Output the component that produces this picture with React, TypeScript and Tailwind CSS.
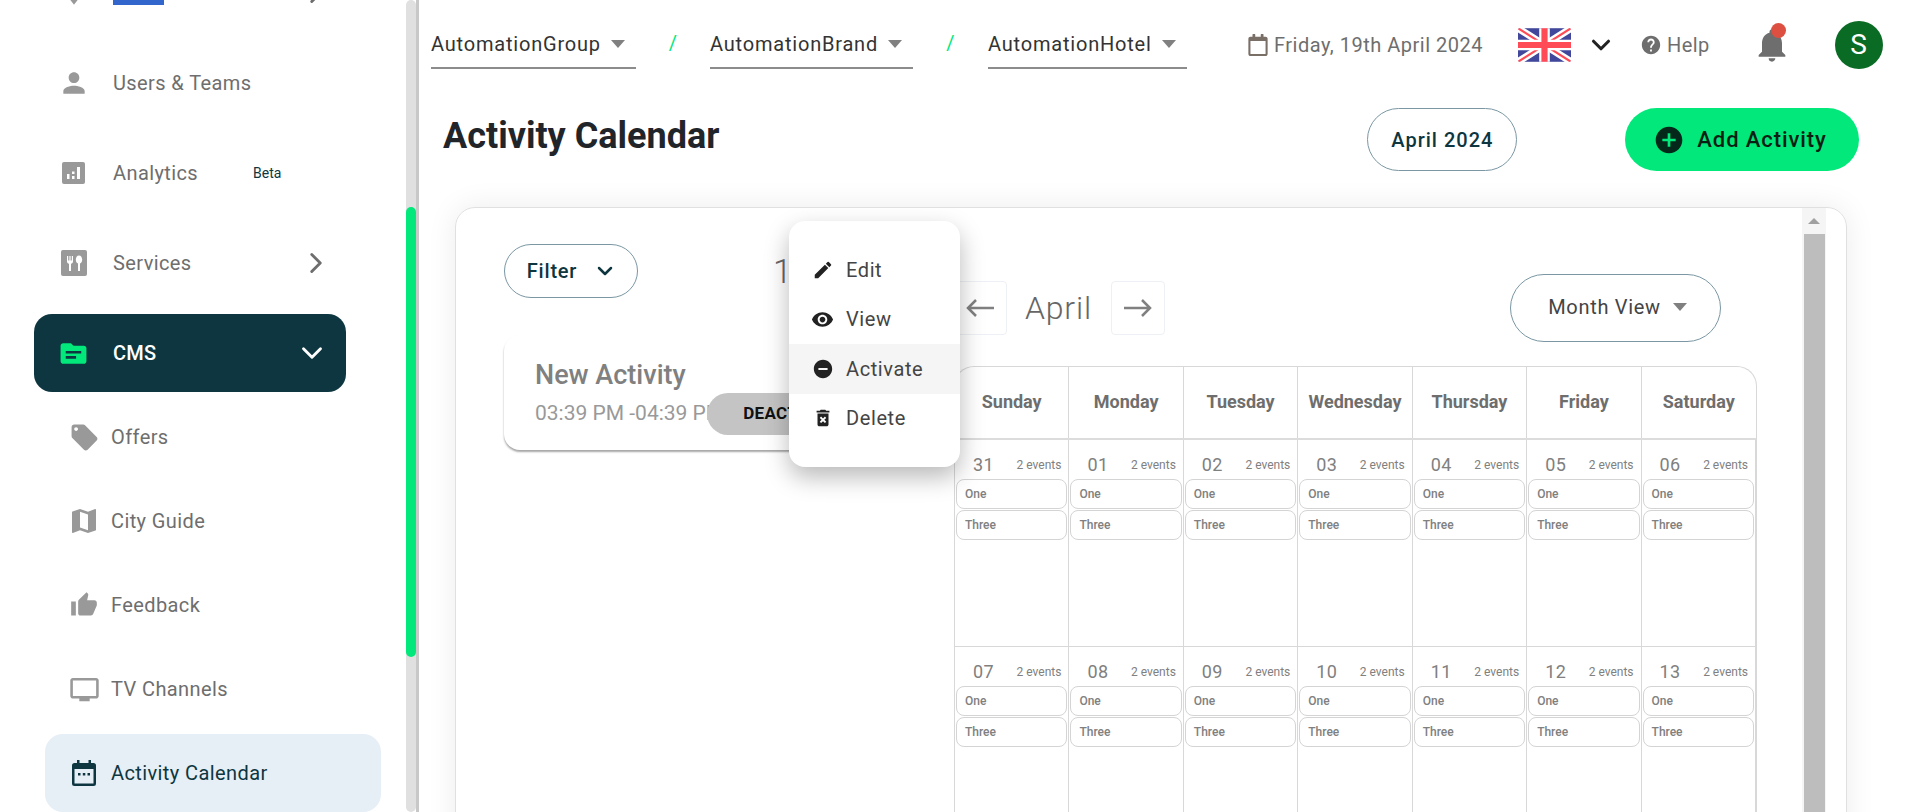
import { ChevronDown, ChevronRight } from 'lucide-react'
import { FaRegCalendar } from 'react-icons/fa'
import {
  MdAddCircle,
  MdDeleteForever,
  MdDoDisturbOn,
  MdEdit,
  MdHelp,
  MdLocalOffer,
  MdLocationOn,
  MdMap,
  MdNotifications,
  MdPerson,
  MdThumbUp,
  MdTopic,
  MdTv,
  MdVisibility,
} from 'react-icons/md'

const days = ['Sunday', 'Monday', 'Tuesday', 'Wednesday', 'Thursday', 'Friday', 'Saturday']
const dates = ['31', '01', '02', '03', '04', '05', '06', '07', '08', '09', '10', '11', '12', '13']

function AnalyticsIcon() {
  return (
    <svg width="23" height="22" viewBox="0 0 23 22" fill="none">
      <rect width="23" height="22" rx="2" fill="#999" />
      <rect x="5" y="12" width="2.500" height="5" fill="#fff" />
      <rect x="10" y="14" width="2.500" height="3" fill="#fff" />
      <rect x="10" y="9.500" width="2.500" height="2.500" fill="#fff" />
      <rect x="15" y="5" width="3" height="12" fill="#fff" />
    </svg>
  )
}

function ServicesIcon() {
  return (
    <svg width="26" height="26" viewBox="0 0 26 26" fill="none">
      <rect width="26" height="26" rx="2" fill="#999" />
      <path d="M6 6v5.500c0 1.200.8 2 2 2.200V21h2v-7.300c1.200-.2 2-1 2-2.200V6h-1.200v4.500H9.600V6H8.400v4.500H7.200V6z" fill="#fff" />
      <path d="M18 5.500c-2 0-3.200 2-3.200 4.300 0 2 1 3.300 2.200 3.700V21h2v-7.500c1.200-.4 2.200-1.700 2.200-3.700 0-2.300-1.200-4.300-3.200-4.300z" fill="#fff" />
    </svg>
  )
}

function CalendarIcon() {
  return (
    <svg width="24" height="26" viewBox="0 0 24 26" fill="none">
      <path d="M5 0h2.500v3h9V0H19v3h2.500A2.500 2.500 0 0 1 24 5.500v18a2.500 2.500 0 0 1-2.500 2.500h-19A2.500 2.500 0 0 1 0 23.500v-18A2.500 2.500 0 0 1 2.500 3H5z" fill="#0d3640" />
      <rect x="2.500" y="9" width="19" height="14.500" fill="#e6eef6" />
      <rect x="6" y="13" width="2.500" height="2.500" fill="#0d3640" />
      <rect x="10.800" y="13" width="2.500" height="2.500" fill="#0d3640" />
      <rect x="15.500" y="13" width="2.500" height="2.500" fill="#0d3640" />
    </svg>
  )
}

function UkFlag() {
  return (
    <svg width="53" height="34" viewBox="0 0 60 38" className="rounded-[2px]">
      <rect width="60" height="38" fill="#41479b" />
      <path d="M0 0L60 38M60 0L0 38" stroke="#fff" strokeWidth="8" />
      <path d="M0 0L60 38M60 0L0 38" stroke="#ff4b55" strokeWidth="2.500" />
      <path d="M30 0V38M0 19H60" stroke="#fff" strokeWidth="12" />
      <path d="M30 0V38M0 19H60" stroke="#ff4b55" strokeWidth="7" />
    </svg>
  )
}

function ArrowIcon({ flip }: { flip?: boolean }) {
  return (
    <svg width="28" height="18" viewBox="0 0 28 18" fill="none" stroke="#808080" strokeWidth="2.500" className={flip ? 'rotate-180' : ''}>
      <path d="M28 9H2M10 1L2 9l8 8" />
    </svg>
  )
}

function Caret() {
  return <span className="h-0 w-0 border-x-[7px] border-t-[8px] border-x-transparent border-t-[#808080]" />
}

function SideItem({ icon, label, extra }: { icon: React.ReactNode; label: string; extra?: React.ReactNode }) {
  return (
    <div className="flex h-[78px] items-center pl-[34px] pr-[73px] text-[20px] tracking-[0.4px] text-[#6e6e6e]">
      <span className="flex w-[79px] shrink-0 justify-center">{icon}</span>
      <span>{label}</span>
      {extra}
    </div>
  )
}

function SubItem({ icon, label, active }: { icon: React.ReactNode; label: string; active?: boolean }) {
  return (
    <div
      className={`ml-[45px] mr-[25px] flex h-[78px] items-center rounded-[18px] text-[20px] tracking-[0.4px] ${
        active ? 'bg-[#e6eef6] text-[#0d3640]' : 'text-[#6e6e6e]'
      }`}
    >
      <span className="flex w-[66px] shrink-0 justify-center pl-[12px]">{icon}</span>
      <span>{label}</span>
    </div>
  )
}

function Sidebar() {
  return (
    <aside className="flex h-full w-[419px] shrink-0 overflow-hidden border-r-[3px] border-[#c8c8c8]">
      <nav className="-mt-[46px] w-[406px] shrink-0">
        <div className="flex flex-col gap-[12px]">
          <div className="flex h-[78px] items-center pl-[34px] pr-[73px]">
            <span className="flex w-[79px] justify-center">
              <MdLocationOn size={28} color="#999" />
            </span>
            <span className="mt-[45px] h-[6px] w-[51px] self-start bg-[#3366cc]" />
            <ChevronRight size={34} strokeWidth={2} color="#6e6e6e" className="ml-auto" />
          </div>
          <SideItem icon={<MdPerson size={32} color="#999" />} label="Users & Teams" />
          <SideItem
            icon={<AnalyticsIcon />}
            label="Analytics"
            extra={<span className="ml-[55px] text-[14px] tracking-normal text-[#0d3640]">Beta</span>}
          />
          <SideItem
            icon={<ServicesIcon />}
            label="Services"
            extra={<ChevronRight size={34} strokeWidth={2} color="#6e6e6e" className="ml-auto" />}
          />
          <div className="ml-[34px] mr-[60px] flex h-[78px] items-center rounded-[18px] bg-[#0d3640] pr-[17px] text-[20px] font-medium tracking-[0.2px] text-white">
            <span className="flex w-[79px] justify-center">
              <MdTopic size={31} color="#02e87b" />
            </span>
            <span>CMS</span>
            <ChevronDown size={34} strokeWidth={2} color="#fff" className="ml-auto" />
          </div>
        </div>
        <div className="mt-[6px] flex flex-col gap-[6px]">
          <SubItem icon={<MdLocalOffer size={31} color="#999" />} label="Offers" />
          <SubItem icon={<MdMap size={32} color="#999" />} label="City Guide" />
          <SubItem icon={<MdThumbUp size={28} color="#999" />} label="Feedback" />
          <SubItem icon={<MdTv size={31} color="#999" />} label="TV Channels" />
          <SubItem icon={<CalendarIcon />} label="Activity Calendar" active />
        </div>
      </nav>
      <div className="h-full w-[10px] shrink-0 rounded-full bg-[#e0e0e0] pt-[207px]">
        <div className="h-[450px] rounded-full bg-[#02e87b]" />
      </div>
    </aside>
  )
}

function PlaceSelect({ label, width }: { label: string; width: string }) {
  return (
    <div className={`flex h-[48px] items-center gap-[10px] border-b-2 border-[#8c8c8c] text-[20px] tracking-[0.8px] text-[#333] ${width}`}>
      <span>{label}</span>
      <Caret />
    </div>
  )
}

function TopBar() {
  return (
    <header className="flex h-[69px] items-end pl-[12px]">
      <PlaceSelect label="AutomationGroup" width="w-[205px]" />
      <span className="flex w-[74px] justify-center pb-[11px] text-[20px] text-[#02e87b]">/</span>
      <PlaceSelect label="AutomationBrand" width="w-[203px]" />
      <span className="flex w-[75px] justify-center pb-[11px] text-[20px] text-[#02e87b]">/</span>
      <PlaceSelect label="AutomationHotel" width="w-[199px]" />
      <div className="flex h-[69px] flex-1 items-center pt-[21px] text-[20px] text-[#6e6e6e]">
        <FaRegCalendar size={22} color="#7a6f66" className="ml-[60px]" />
        <span className="ml-[5px] tracking-[0.5px]">Friday, 19th April 2024</span>
        <span className="ml-[35px]">
          <UkFlag />
        </span>
        <ChevronDown size={30} strokeWidth={2.500} color="#222" className="ml-[15px]" />
        <MdHelp size={22} color="#6e6e6e" className="ml-[24px]" />
        <span className="ml-[5px] tracking-[0.4px]">Help</span>
        <span className="relative ml-[42px] flex">
          <MdNotifications size={40} color="#6e6e6e" />
          <span className="absolute -top-[2px] left-[19px] h-[15px] w-[15px] rounded-full bg-[#dc4f41]" />
        </span>
        <span className="ml-[43px] flex h-[48px] w-[48px] items-center justify-center rounded-full bg-[#0a6b24] text-[28px] text-white">
          S
        </span>
      </div>
    </header>
  )
}

function ActionMenu() {
  const items = [
    { label: 'Edit', icon: <MdEdit size={22} /> },
    { label: 'View', icon: <MdVisibility size={23} /> },
    { label: 'Activate', icon: <MdDoDisturbOn size={22} />, active: true },
    { label: 'Delete', icon: <MdDeleteForever size={22} /> },
  ]
  return (
    <div className="absolute left-[333px] top-[13px] z-10 flex h-[246px] w-[171px] flex-col rounded-[16px] bg-white pt-[24px] shadow-[0_10px_25px_rgba(0,0,0,0.28)]">
      {items.map((item) => (
        <div
          key={item.label}
          className={`flex h-[49.500px] items-center text-[20px] tracking-[0.6px] text-[#444] ${item.active ? 'bg-[#f5f5f5]' : ''}`}
        >
          <span className="flex w-[57px] justify-center pl-[10px] text-[#222]">{item.icon}</span>
          <span>{item.label}</span>
        </div>
      ))}
    </div>
  )
}

function DayCell({ date }: { date: string }) {
  return (
    <div className="h-[207px] border-b border-r border-[#d8d8d8] px-[1px]">
      <div className="flex h-[39px] items-center justify-between pl-[17px] pr-[6px] pt-[10px]">
        <span className="text-[18px] tracking-[0.4px] text-[#808080]">{date}</span>
        <span className="text-[12px] text-[#808080]">2 events</span>
      </div>
      {['One', 'Three'].map((name) => (
        <div
          key={name}
          className="mb-[1px] flex h-[30px] items-center rounded-[8px] border border-[#d4d4d4] pl-[8px] text-[12px] font-medium text-[#808080]"
        >
          {name}
        </div>
      ))}
    </div>
  )
}

function CalendarGrid() {
  return (
    <div className="mt-[24px] w-[803px] overflow-hidden rounded-t-[20px] border-l border-r border-t border-[#d8d8d8]">
      <div className="grid grid-cols-7 border-b-2 border-[#dcdcdc]">
        {days.map((day) => (
          <div key={day} className="flex h-[71px] items-center justify-center border-r border-[#d8d8d8] pb-[2px] text-[18px] font-bold text-[#6e6e6e] last:border-r-0">
            {day}
          </div>
        ))}
      </div>
      <div className="grid grid-cols-7">
        {dates.map((date) => (
          <DayCell key={date} date={date} />
        ))}
      </div>
    </div>
  )
}

function CalendarCard() {
  return (
    <section className="relative ml-[36px] mt-[36px] flex h-[640px] w-[1392px] overflow-hidden rounded-[20px] border border-[#e0e0e0] shadow-[0_0_30px_rgba(0,0,0,0.08)]">
      <div className="w-[498px] shrink-0 pl-[48px] pr-[14px] pt-[36px]">
        <div className="flex items-center">
          <button className="flex h-[54px] w-[134px] items-center justify-center gap-[16px] rounded-full border border-[#7a97a3] pl-[2px] text-[20px] font-medium tracking-[0.8px] text-[#0d3640]">
            Filter
            <ChevronDown size={24} strokeWidth={2.500} />
          </button>
          <span className="ml-[135px] text-[34px] font-light text-[#666]">19</span>
        </div>
        <div className="mt-[37px] h-[115px] rounded-[16px] pl-[31px] pt-[23px] shadow-[0_2px_2px_rgba(0,0,0,0.35)]">
          <h3 className="text-[27px] font-medium leading-[35px] text-[#808080]">New Activity</h3>
          <div className="flex items-center">
            <span className="whitespace-nowrap text-[21px] text-[#999]">03:39 PM -04:39 PM</span>
            <span className="-ml-[17px] flex h-[42px] w-[170px] shrink-0 items-center rounded-full bg-[#c4c4c4] pl-[36px] text-[17px] font-bold tracking-[0.3px] text-[#111]">
              DEACTIVATE
            </span>
          </div>
        </div>
      </div>
      <div className="flex-1">
        <div className="flex h-[134px] items-end">
          <div className="flex h-[68px] w-[803px] items-center">
            <button className="-ml-[1px] flex h-[54px] w-[54px] items-center justify-center rounded-[4px] border border-[#edf1f5]">
              <ArrowIcon />
            </button>
            <span className="ml-[18px] text-[32px] font-light tracking-[0.8px] text-[#666]">April</span>
            <button className="ml-[19px] flex h-[54px] w-[54px] items-center justify-center rounded-[4px] border border-[#edf1f5]">
              <ArrowIcon flip />
            </button>
            <button className="ml-auto mr-[36px] flex h-[68px] w-[211px] items-center justify-center gap-[12px] rounded-full border border-[#7a97a3] pb-[2px] pl-[4px] text-[20px] tracking-[0.7px] text-[#444]">
              Month View
              <Caret />
            </button>
          </div>
        </div>
        <CalendarGrid />
      </div>
      <div className="ml-auto mr-[20px] flex w-[24px] shrink-0 flex-col items-center bg-[#f5f5f5]">
        <div className="flex h-[26px] w-[21px] items-center justify-center">
          <span className="h-0 w-0 border-x-[6px] border-b-[6px] border-x-transparent border-b-[#a0a0a0]" />
        </div>
        <div className="w-[21px] flex-1 bg-[#bdbdbd]" />
      </div>
      <ActionMenu />
    </section>
  )
}

export default function App() {
  return (
    <div className="flex h-[812px] w-[1920px] overflow-hidden bg-white font-[Roboto,sans-serif]">
      <Sidebar />
      <main className="min-w-0 flex-1">
        <TopBar />
        <div className="flex h-[102px] items-end">
          <div className="flex h-[63px] w-full items-center pl-[24px]">
            <h1 className="pb-[8px] text-[36px] font-bold text-[#212529]">Activity Calendar</h1>
            <button className="ml-[648px] h-[63px] w-[150px] rounded-full border border-[#7a97a3] text-[20px] font-medium tracking-[1px] text-[#0d3640]">
              April 2024
            </button>
            <button className="ml-[108px] flex h-[63px] w-[234px] items-center rounded-full bg-[#02e87b] pl-[30px] text-[22px] font-medium tracking-[0.9px] text-[#0a1f14]">
              <MdAddCircle size={32} className="-ml-[2px] mr-[12px]" color="#04281a" />
              Add Activity
            </button>
          </div>
        </div>
        <CalendarCard />
      </main>
    </div>
  )
}
